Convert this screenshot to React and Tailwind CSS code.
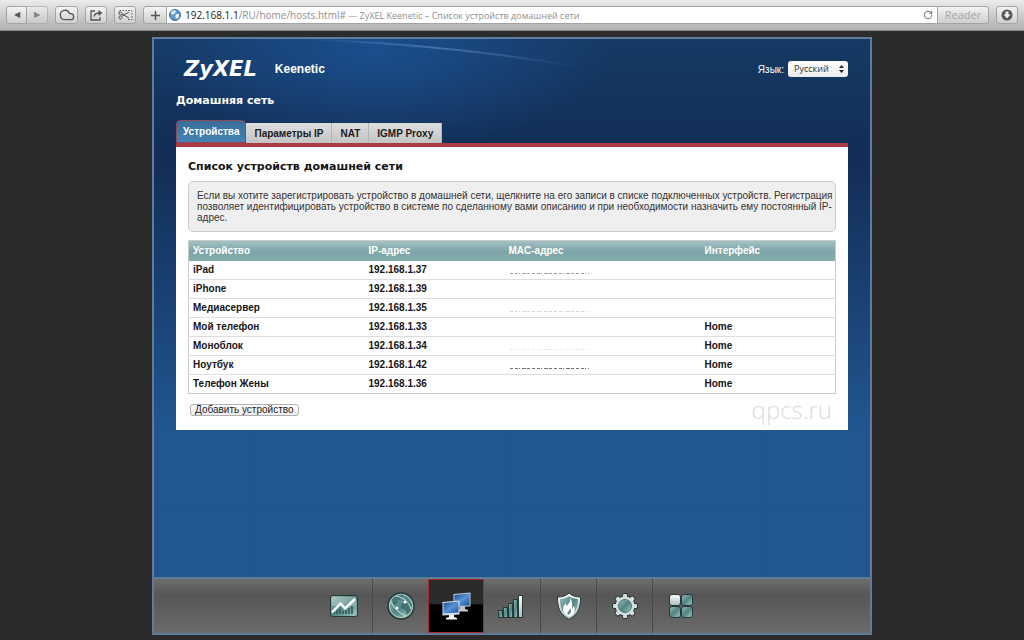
import React from 'react';
import { LuCloud, LuRotateCw } from 'react-icons/lu';

const devices = [
  { name: 'iPad', ip: '192.168.1.37', mask: 'text-gray-400', iface: '' },
  { name: 'iPhone', ip: '192.168.1.39', mask: '', iface: '' },
  { name: 'Медиасервер', ip: '192.168.1.35', mask: 'text-gray-300', iface: '' },
  { name: 'Мой телефон', ip: '192.168.1.33', mask: '', iface: 'Home' },
  { name: 'Моноблок', ip: '192.168.1.34', mask: 'text-gray-200', iface: 'Home' },
  { name: 'Ноутбук', ip: '192.168.1.42', mask: 'text-gray-500', iface: 'Home' },
  { name: 'Телефон Жены', ip: '192.168.1.36', mask: '', iface: 'Home' },
];

const tabs = ['Устройства', 'Параметры IP', 'NAT', 'IGMP Proxy'];

const toolButton =
  'flex h-[18px] items-center justify-center rounded-[3px] border border-[#a3a3a3] bg-linear-to-b from-[#f3f3f3] to-[#cfcfcf] text-[#555]';

// Shared gradients for the bottom menu icons
const IconDefs = () => (
  <svg width="0" height="0" className="absolute" aria-hidden="true">
    <defs>
      <linearGradient id="teal" x1="0" y1="0" x2="1" y2="1">
        <stop offset="0" stopColor="#9dbdb9" />
        <stop offset="0.5" stopColor="#4f8583" />
        <stop offset="1" stopColor="#a9c9c3" />
      </linearGradient>
      <linearGradient id="silver" x1="0" y1="0" x2="0" y2="1">
        <stop offset="0" stopColor="#ffffff" />
        <stop offset="1" stopColor="#a9bcbb" />
      </linearGradient>
      <linearGradient id="screen" x1="0" y1="0" x2="1" y2="1">
        <stop offset="0" stopColor="#17458c" />
        <stop offset="0.5" stopColor="#5b94d6" />
        <stop offset="1" stopColor="#1b4f9c" />
      </linearGradient>
      <linearGradient id="streak" x1="0" y1="0" x2="1" y2="0">
        <stop offset="0" stopColor="#6f9bd0" stopOpacity="0" />
        <stop offset="0.5" stopColor="#6f9bd0" stopOpacity="0.5" />
        <stop offset="1" stopColor="#6f9bd0" stopOpacity="0" />
      </linearGradient>
    </defs>
  </svg>
);

const ChartIcon = () => (
  <svg width="32" height="32" viewBox="0 0 32 32">
    <rect x="2.5" y="5.5" width="27" height="21" rx="2.5" fill="url(#teal)" stroke="#27383a" />
    <rect x="4" y="7" width="24" height="9" rx="1" fill="#fff" opacity="0.25" />
    <path d="M6 24v-3M9 24v-4M12 24v-5M15 24v-3M18 24v-4M21 24v-6M24 24v-8" stroke="#2f5556" strokeWidth="1.5" />
    <path d="M4 22.5L12.5 13.5L17 18.5L27 9" fill="none" stroke="#fff" strokeWidth="2.5" />
  </svg>
);

const GlobeIcon = () => (
  <svg width="32" height="32" viewBox="0 0 32 32">
    <circle cx="16" cy="16" r="13" fill="url(#teal)" stroke="#27383a" strokeWidth="1.5" />
    <circle cx="16" cy="16" r="11.5" fill="none" stroke="#b9d2ce" />
    <path d="M7 9c3-4 8-5 12-4l-2 4-4 1-1 4-4 1zM17 14l5-3 5 3-1 7-4 4-2-5-4-2z" fill="#2f6466" opacity="0.7" />
    <path d="M6 12c3 5 6 10 15 14M11 6c7 1 13 6 15 13" fill="none" stroke="#d3e6e2" strokeWidth="1" />
    <circle cx="12" cy="18" r="1.5" fill="#fff" />
    <circle cx="20" cy="12" r="1.5" fill="#fff" />
  </svg>
);

const MonitorsIcon = () => (
  <svg width="32" height="32" viewBox="0 0 32 32">
    <path d="M20 16h5v3l3 1v1.500H17V20l3-1z" fill="#c3c9ce" />
    <path d="M13.500 4L30.500 2.500V16.500L13.500 17Z" fill="#b9c8da" />
    <path d="M14.500 5L29.500 3.500V15.500L14.500 16Z" fill="url(#screen)" />
    <path d="M9 24h5v3l3 1v1.500H6V28l3-1z" fill="#f2f4f5" />
    <path d="M2.500 12L19.500 10.500V24.500L2.500 25.500Z" fill="#d5e0ec" />
    <path d="M3.500 13L18.500 11.500V22.500L3.500 23.500Z" fill="url(#screen)" />
  </svg>
);

const SignalIcon = () => (
  <svg width="32" height="32" viewBox="0 0 32 32">
    <g stroke="#27383a">
      <rect x="2.5" y="20.5" width="4" height="7" fill="url(#teal)" />
      <rect x="7.5" y="17.5" width="4" height="10" fill="url(#teal)" />
      <rect x="12.5" y="13.5" width="4" height="14" fill="url(#teal)" />
      <rect x="17.5" y="9.5" width="4" height="18" fill="url(#teal)" />
      <rect x="22.5" y="5.5" width="4" height="22" fill="url(#silver)" />
    </g>
  </svg>
);

const ShieldIcon = () => (
  <svg width="32" height="32" viewBox="0 0 32 32">
    <path d="M16 3C13 6 9 7 4.500 7C4.500 17 6 24 16 29.500C26 24 27.500 17 27.500 7C23 7 19 6 16 3Z" fill="url(#silver)" stroke="#27383a" />
    <path d="M16 6C13.500 8 10 9 7 9C7 17 9 23 16 27C23 23 25 17 25 9C22 9 18.500 8 16 6Z" fill="url(#teal)" />
    <path d="M17 8c1 4-2 6-3 8-1-1-1-2-1-3-3 3-5 8 0 12l3 2c5-2 7-6 5-11-1 1-1 2-2 3 0-4 1-7-2-11z" fill="#fff" />
    <path d="M15 25c-2-3 2-4 2-7 2 3 1 6-2 7z" fill="#5f9190" />
  </svg>
);

const GearIcon = () => (
  <svg width="32" height="32" viewBox="0 0 32 32">
    <g fill="#d3dddc" stroke="#27383a" strokeLinejoin="round">
      {[0, 45, 90, 135, 180, 225, 270, 315].map((angle) => (
        <path key={angle} d="M13 8L14 3.500H18L19 8Z" transform={`rotate(${angle} 16 16)`} />
      ))}
      <circle cx="16" cy="16" r="10" />
    </g>
    {[0, 45, 90, 135].map((angle) => (
      <rect key={angle} x="14" y="5" width="4" height="22" fill="#d3dddc" transform={`rotate(${angle} 16 16)`} />
    ))}
    <circle cx="16" cy="16" r="6.5" fill="url(#teal)" stroke="#4d7675" />
  </svg>
);

const GridIcon = () => (
  <svg width="32" height="32" viewBox="0 0 32 32">
    <g stroke="#27383a">
      <rect x="4.5" y="4.5" width="11" height="11" rx="2.5" fill="url(#silver)" />
      <rect x="16.5" y="4.5" width="11" height="11" rx="2.5" fill="url(#teal)" />
      <rect x="4.5" y="16.5" width="11" height="11" rx="2.5" fill="url(#teal)" />
      <rect x="16.5" y="16.5" width="11" height="11" rx="2.5" fill="url(#teal)" />
    </g>
  </svg>
);

const menu = [
  { label: 'Монитор', icon: ChartIcon },
  { label: 'Интернет', icon: GlobeIcon },
  { label: 'Домашняя сеть', icon: MonitorsIcon, active: true },
  { label: 'Сеть Wi-Fi', icon: SignalIcon },
  { label: 'Безопасность', icon: ShieldIcon },
  { label: 'Система', icon: GearIcon },
  { label: 'Приложения', icon: GridIcon },
];

const BrowserBar = () => (
  <header className="flex h-[31px] items-center gap-[7px] border-b border-[#8a8a8a] bg-linear-to-b from-[#ececec] to-[#b0b0b0] px-1.5">
    <div className="flex">
      <button aria-label="Назад" className={`${toolButton} w-[21px] rounded-r-none text-[8px]`}>◀</button>
      <button aria-label="Вперёд" className={`${toolButton} w-[21px] rounded-l-none border-l-0 text-[8px] opacity-60`}>▶</button>
    </div>
    <button aria-label="iCloud" className={`${toolButton} w-[23px]`}>
      <LuCloud size={16} />
    </button>
    <button aria-label="Поделиться" className={`${toolButton} w-[22px]`}>
      <svg width="13" height="12" viewBox="0 0 13 12" fill="none" stroke="currentColor" strokeWidth="1.3">
        <path d="M5 2H1v9h9V8M4 7.500C4.500 5 6 4 9 4" />
        <path d="M8.500 1L12.500 4L8.500 7Z" fill="currentColor" stroke="none" />
      </svg>
    </button>
    <button aria-label="Вырезать" className={`${toolButton} w-[22px]`}>
      <svg width="15" height="12" viewBox="0 0 15 12" fill="none" stroke="currentColor">
        <path d="M1 4V1.500H14V10.500H10" strokeDasharray="1.500 1.500" />
        <path d="M11 3L4 7M11 9L4 5" />
        <circle cx="2.5" cy="4.5" r="1.5" />
        <circle cx="2.5" cy="8.5" r="1.5" />
      </svg>
    </button>
    <div className="flex min-w-0 flex-1">
      <button aria-label="Добавить закладку" className={`${toolButton} w-6 rounded-r-none`}>
        <svg width="9" height="9" viewBox="0 0 9 9" stroke="currentColor" strokeWidth="1.5">
          <path d="M4.500 0V9M0 4.500H9" />
        </svg>
      </button>
      <div className="flex h-[18px] min-w-0 flex-1 items-center gap-1 border-y border-[#a3a3a3] bg-white pr-1 pl-0.5">
        <svg width="12" height="12" viewBox="0 0 12 12" className="shrink-0">
          <circle cx="6" cy="6" r="5.5" fill="#5f97cc" stroke="#3c6ea5" />
          <path d="M3 2l3-1 1 2-2 2-2 1-1-2zM7 5l3 0 0 3-2 2-2-2z" fill="#e4eff8" />
        </svg>
        <p className="flex-1 truncate font-['Open_Sans','Noto_Sans',sans-serif] text-[9px] leading-4 text-[#8f8f8f]">
          <span className="text-[10px] text-[#222]">192.168.1.1</span>
          <span className="text-[10px]">/RU/home/hosts.html#</span>
          {' — ZyXEL Keenetic – Список устройств домашней сети'}
        </p>
        <button aria-label="Обновить" className="text-[#555]">
          <LuRotateCw size={10} />
        </button>
      </div>
      <button className={`${toolButton} w-[52px] rounded-l-none font-['Open_Sans',sans-serif] text-[11px] text-[#a5a5a5]`}>
        Reader
      </button>
    </div>
    <button aria-label="Загрузки" className={`${toolButton} w-[22px]`}>
      <svg width="12" height="12" viewBox="0 0 12 12">
        <circle cx="6" cy="6" r="5.5" fill="#555" />
        <path d="M4.500 2.500h3v3h2L6 9.500 2.500 5.500h2z" fill="#eee" />
      </svg>
    </button>
  </header>
);

const LanguageSelect = () => (
  <div className="flex items-center">
    <label htmlFor="lang" className="mr-1 text-[10px]">Язык:</label>
    <div className="relative flex">
      <select
        id="lang"
        className="h-4 w-[60px] appearance-none rounded-[3px] bg-linear-to-b from-white to-[#ececec] px-1.5 font-['Open_Sans',sans-serif] text-[9px] text-[#333]"
      >
        <option>Русский</option>
      </select>
      <svg width="5" height="8" viewBox="0 0 5 8" className="pointer-events-none absolute top-1 right-1" aria-hidden="true">
        <path d="M0 3L2.500 0L5 3ZM0 5L2.500 8L5 5Z" fill="#222" />
      </svg>
    </div>
  </div>
);

// Leftover strokes of a hidden MAC address
const MaskedMac = ({ tone }) => (
  <svg width="80" height="3" viewBox="0 0 80 3" className={`mt-1.5 ${tone}`} aria-label="MAC-адрес скрыт">
    <path d="M1 1.500H80" stroke="currentColor" strokeDasharray="3 2 3 1 1 2 4 1 3 2" />
  </svg>
);

const DeviceTable = () => (
  <table className="mt-2 w-full table-fixed border border-[#c9c9c9] text-left text-[10px] leading-[18px] font-bold text-[#151515]">
    <thead>
      <tr className="bg-linear-to-b from-[#a3c1c3] via-[#7da5a8] to-[#84abad] text-white">
        <th className="w-44 px-1 py-px">Устройство</th>
        <th className="w-35 px-1 py-px">IP-адрес</th>
        <th className="w-49 px-1 py-px">MAC-адрес</th>
        <th className="px-1 py-px">Интерфейс</th>
      </tr>
    </thead>
    <tbody>
      {devices.map(({ name, ip, mask, iface }) => (
        <tr key={ip} className="border-b border-[#dedede] last:border-[#c9c9c9]">
          <td className="px-1">{name}</td>
          <td className="px-1">{ip}</td>
          <td className="px-1">{mask && <MaskedMac tone={mask} />}</td>
          <td className="px-1">{iface}</td>
        </tr>
      ))}
    </tbody>
  </table>
);

const BottomMenu = () => (
  <nav className="flex h-14 justify-center border-t-2 border-[#5f7d96] bg-linear-to-b from-[#6e6e6e] via-[#565656] via-30% to-[#6b6b6b]">
    {menu.map(({ label, icon: Icon, active }, i) => (
      <a
        key={label}
        href="#"
        aria-label={label}
        className={`flex w-14 items-center justify-center ${
          active
            ? 'border border-[#a52a2a] bg-linear-to-b from-[#2b2b2b] from-45% to-black to-50%'
            : i > 0 && !menu[i - 1].active
              ? 'border-l border-[#4a4a4a]'
              : ''
        }`}
      >
        <Icon />
      </a>
    ))}
  </nav>
);

const App = () => (
  <div className="flex min-h-screen flex-col bg-[#2b2b2b] font-['Liberation_Sans',Arial,sans-serif]">
    <IconDefs />
    <BrowserBar />
    <main className="relative mx-auto mt-1.5 mb-[5px] flex w-full max-w-[720px] flex-1 flex-col border-2 border-[#5f7c9f] bg-linear-to-b from-[#153a63] via-[#122d56] via-20% to-[#215690] to-66%">
      {/* Light streak across the header */}
      <svg width="280" height="30" viewBox="0 0 280 30" className="pointer-events-none absolute top-0 left-36" aria-hidden="true">
        <path d="M0 0C90 3 190 12 280 28" fill="none" stroke="url(#streak)" strokeWidth="2" />
      </svg>
      <div className="flex-1 bg-[radial-gradient(ellipse_240px_100px_at_220px_10px,#1b4e8e,transparent)] px-[22px] pt-5">
        <div className="flex items-center text-white">
          <span className="pl-2 font-['DejaVu_Sans',Verdana,sans-serif] text-[21px] leading-5 font-bold italic">ZyXEL</span>
          <span className="ml-[18px] flex-1 text-[12px] font-bold">Keenetic</span>
          <LanguageSelect />
        </div>
        <h1 className="mt-3.5 font-['DejaVu_Sans',Verdana,sans-serif] text-[11px] leading-4 font-bold text-white">
          Домашняя сеть
        </h1>
        <div className="mt-[11px] flex items-end text-[10px] font-bold" role="tablist">
          {tabs.map((tab, i) => (
            <button
              key={tab}
              role="tab"
              aria-selected={i === 0}
              className={
                i === 0
                  ? 'h-[23px] rounded-t border border-[#8a4a5a] bg-linear-to-b from-[#3a6d9c] to-[#4483b4] px-1.5 text-white'
                  : 'h-5 border-r border-[#b5b5b5] bg-linear-to-b from-[#dedede] to-[#c4c4c4] px-2 text-[#1c1c1c]'
              }
            >
              {tab}
            </button>
          ))}
        </div>
        <section className="border-t-4 border-[#a83a44] bg-white px-3 pt-2 pb-2">
          <h2 className="font-['DejaVu_Sans',Verdana,sans-serif] text-[11px] leading-6 font-bold text-[#151515]">
            Список устройств домашней сети
          </h2>
          <p className="mt-0.5 rounded-[5px] border border-[#cfcbc0] bg-[#efefef] py-2 pl-2 text-[10px] leading-[11px] text-[#333]">
            Если вы хотите зарегистрировать устройство в домашней сети, щелкните на его записи в списке подключенных
            устройств. Регистрация позволяет идентифицировать устройство в системе по сделанному вами описанию и при
            необходимости назначить ему постоянный IP-адрес.
          </p>
          <DeviceTable />
          <div className="flex items-start justify-between">
            <button className="mt-2.5 ml-0.5 h-3 rounded-[3px] border border-[#b0b0b0] bg-linear-to-b from-white to-[#ececec] px-1 text-[10px] leading-[10px] text-[#222]">
              Добавить устройство
            </button>
            <span className="mt-1 mr-1 font-['Open_Sans',sans-serif] text-[24px] leading-6 font-light text-[#dcdcdc]">
              qpcs.ru
            </span>
          </div>
        </section>
      </div>
      <BottomMenu />
    </main>
  </div>
);

export default App;
